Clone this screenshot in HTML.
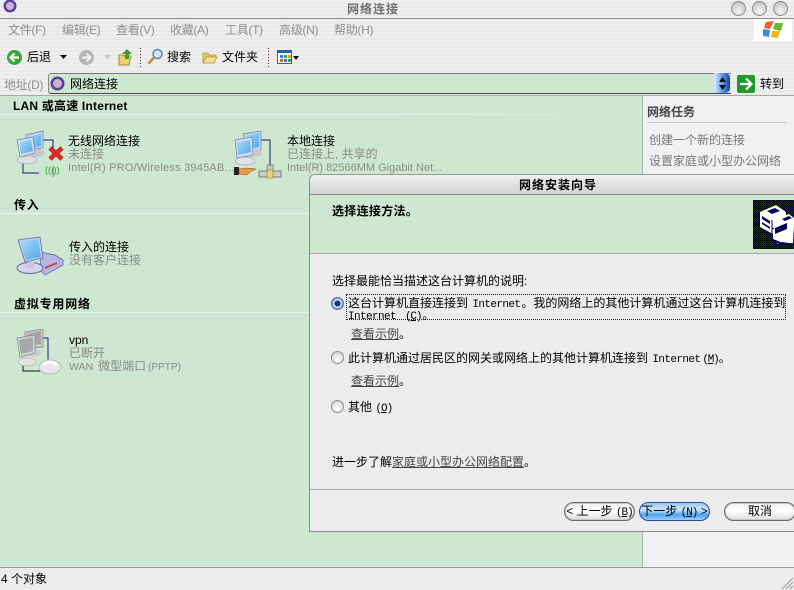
<!DOCTYPE html>
<html><head><meta charset="utf-8"><title>网络连接</title>
<style>
html,body{margin:0;padding:0}
body{width:794px;height:590px;overflow:hidden;position:relative;background:#ececec;font:12px/14px "WenQuanYi Zen Hei","Liberation Sans","Noto Sans CJK SC",sans-serif;color:#000}
.a{position:absolute;white-space:nowrap}
.stripe{background:repeating-linear-gradient(180deg,#efefef 0,#efefef 2px,#e9e9e9 2px,#e9e9e9 4px)}
.g{color:#8b8b8b}
.m{color:#8f8f8f;top:23px;letter-spacing:-.3px}
.b{font-weight:bold}
.l{font-family:"Liberation Sans",sans-serif;font-size:11px}
.t{font-family:"Liberation Mono",monospace;font-size:11px;letter-spacing:-.6px;color:#000}
.lnk{color:#444;text-decoration:underline}
.hr{position:absolute;height:1px}
.wbtn{position:absolute;width:13px;height:13px;border-radius:50%;top:1px;background:radial-gradient(circle at 50% 70%,#f4f4f4,#cfcfcf 65%,#aaa);border:1px solid #8c8c8c}
.radio{position:absolute;left:331px;width:11px;height:11px;border-radius:50%;border:1px solid #8a8a8a;background:radial-gradient(circle at 50% 75%,#fff,#d0d0d0)}
.btn{position:absolute;top:502px;height:17px;border:1px solid #6a6a6a;border-radius:10px;box-shadow:inset 0 0 0 1px #c8c8c8;background:linear-gradient(#f0f0f0,#fff 45%,#dedede);text-align:center;line-height:17px}
svg{position:absolute;display:block}
</style></head><body>

<div class="a stripe" style="left:0;top:0;width:794px;height:567px"></div>
<!-- title bar -->
<div class="a" style="left:0;top:18px;width:794px;height:1px;background:#8c8c8c"></div>
<svg style="left:2px;top:0" width="16" height="14"><circle cx="8" cy="6" r="6.5" fill="#5b3f9c"/><circle cx="8" cy="6" r="4" fill="#c9b3dc"/><circle cx="8" cy="6" r="1.8" fill="#eaa9c8"/></svg>
<div class="a b" style="left:347px;top:2px;color:#707070;letter-spacing:1px">网络连接</div>
<div class="wbtn" style="left:731px"></div><div class="wbtn" style="left:752px"></div><div class="wbtn" style="left:773px"></div>

<!-- menu -->
<div class="a m" style="left:8px">文件(F)</div>
<div class="a m" style="left:62px">编辑(E)</div>
<div class="a m" style="left:116px">查看(V)</div>
<div class="a m" style="left:170px">收藏(A)</div>
<div class="a m" style="left:225px">工具(T)</div>
<div class="a m" style="left:279px">高级(N)</div>
<div class="a m" style="left:334px">帮助(H)</div>
<div class="a" style="left:754px;top:19px;width:38px;height:22px;background:#fff"></div>
<svg style="left:763px;top:20px" width="21" height="20"><path d="M3 2l8-1-4 8-6-1z" fill="#e8622c"/><path d="M12 3h8l-2 8-8-2z" fill="#6fb52c"/><path d="M0 9l7 1-1 7-6-1z" fill="#3d8be0"/><path d="M9 11h8l-2 7-7-1z" fill="#f3b81c"/></svg>

<!-- toolbar -->
<svg style="left:7px;top:50px" width="15" height="15"><circle cx="7.5" cy="7.5" r="7.5" fill="#3aa53a"/><path d="M12 7.5H4M7.5 3.5l-4 4 4 4" fill="none" stroke="#fff" stroke-width="2.2"/></svg>
<div class="a" style="left:27px;top:50px">后退</div>
<svg style="left:60px;top:55px" width="7" height="4"><path d="M0 0h7L3.5 4z" fill="#111"/></svg>
<svg style="left:79px;top:50px" width="15" height="15"><circle cx="7.5" cy="7.5" r="7.5" fill="#b4b4b4"/><path d="M3 7.5h8M7.5 3.5l4 4-4 4" fill="none" stroke="#eee" stroke-width="2.2"/></svg>
<svg style="left:104px;top:55px" width="7" height="4"><path d="M0 0h7L3.5 4z" fill="#c4c4c4"/></svg>
<svg style="left:118px;top:48px" width="16" height="18"><path d="M1 7h4l1 1h7l-2 9H1z" fill="#f0cf70" stroke="#a98a30"/><path d="M9 1l5 5h-3v5H7V6H4z" fill="#3d9a2f"/></svg>
<div class="a" style="left:140px;top:48px;width:1px;height:19px;background:repeating-linear-gradient(180deg,#5a1e2a 0 1px,transparent 1px 3px)"></div>
<svg style="left:147px;top:48px" width="17" height="18"><circle cx="10.500" cy="6" r="4.500" fill="#cfe3f7" stroke="#6a87b8" stroke-width="1.500"/><path d="M7 9.500L1.500 15.500" stroke="#c78a3a" stroke-width="2.500"/></svg>
<div class="a" style="left:167px;top:50px">搜索</div>
<svg style="left:202px;top:51px" width="16" height="13"><path d="M1 2h5l1 2h7v2H4L2 12H1z" fill="#e5c560" stroke="#b79635" stroke-width=".8"/><path d="M4 6h11l-3 6H1.500z" fill="#f5de93" stroke="#b79635" stroke-width=".8"/></svg>
<div class="a" style="left:222px;top:50px">文件夹</div>
<div class="a" style="left:268px;top:48px;width:1px;height:19px;background:repeating-linear-gradient(180deg,#5a1e2a 0 1px,transparent 1px 3px)"></div>
<svg style="left:277px;top:50px" width="16" height="15"><rect x=".5" y=".5" width="14" height="13" fill="#fff" stroke="#2b5fb5"/><rect x="1" y="1" width="13" height="2" fill="#2b5fb5"/><path d="M3 5h3v3H3z" fill="#3a7ad0"/><path d="M7 5h3v3H7z" fill="#3ea04a"/><path d="M11 5h3v3h-3z" fill="#d8a030"/><path d="M3 9h3v3H3z" fill="#d0603a"/><path d="M7 9h3v3H7z" fill="#3a7ad0"/><path d="M11 9h3v3h-3z" fill="#3ea04a"/></svg>
<svg style="left:293px;top:56px" width="6" height="4"><path d="M0 0h6L3 4z" fill="#111"/></svg>

<!-- address -->
<div class="a m" style="left:4px;top:78px">地址(D)</div>
<div class="a" style="left:48px;top:73px;width:682px;height:19px;background:#cde7d0;border-top:1px solid #7a7a7a;border-bottom:1px solid #444;border-left:1px solid #888;border-radius:3px 0 0 3px"></div>
<svg style="left:50px;top:76px" width="15" height="15"><circle cx="7.500" cy="7.500" r="7" fill="#5b3f9c"/><circle cx="7.500" cy="7.500" r="4.500" fill="#c9b3dc"/><circle cx="7.500" cy="7.500" r="2" fill="#eaa9c8"/></svg>
<div class="a" style="left:70px;top:77px">网络连接</div>
<div class="a" style="left:714px;top:73px;width:16px;height:20px;background:linear-gradient(90deg,#dcebff,#4c8be8 60%,#1a3f9a);border-radius:0 5px 5px 0"></div>
<svg style="left:719px;top:77px" width="7" height="13"><path d="M3.500 0L7 5H0zM0 8h7l-3.500 5z" fill="#111"/></svg>
<svg style="left:737px;top:75px" width="18" height="18"><rect width="18" height="18" rx="2" fill="#1d9a2c"/><path d="M3 9h11M9 3.500L14.500 9 9 14.500" fill="none" stroke="#fff" stroke-width="2.200"/></svg>
<div class="a" style="left:760px;top:77px">转到</div>

<!-- content -->
<div class="a" style="left:0;top:95px;width:794px;height:1px;background:#a8a8a8"></div>
<div class="a" style="left:0;top:96px;width:642px;height:471px;background:#cde7d0"></div>
<div class="a" style="left:642px;top:96px;width:1px;height:471px;background:#aab5ab"></div>
<div class="a" style="left:643px;top:96px;width:151px;height:471px;background:#f1f1f1"></div>
<div class="a" style="left:0;top:567px;width:794px;height:1px;background:#9a9a9a"></div>

<div class="a b" style="left:13px;top:99px;letter-spacing:.2px">LAN 或高速 Internet</div>
<div class="hr" style="left:0;top:114px;width:642px;background:linear-gradient(90deg,#e8f3e9,#e8f3e9 60%,#cde7d0)"></div>
<div class="a b" style="left:14px;top:198px;letter-spacing:.8px">传入</div>
<div class="hr" style="left:0;top:213px;width:642px;background:linear-gradient(90deg,#e8f3e9,#e8f3e9 60%,#cde7d0)"></div>
<div class="a b" style="left:14px;top:297px;letter-spacing:.8px">虚拟专用网络</div>
<div class="hr" style="left:0;top:312px;width:642px;background:linear-gradient(90deg,#e8f3e9,#e8f3e9 60%,#cde7d0)"></div>

<!-- wireless -->
<svg style="left:15px;top:129px" width="50" height="50">
<defs><linearGradient id="s" x1="0" y1="0" x2="1" y2="1"><stop offset="0" stop-color="#a8dcfa"/><stop offset="1" stop-color="#4fa6ea"/></linearGradient></defs>
<path d="M28 11h10v8" fill="none" stroke="#1a1a70"/><path d="M8 34v10h16" fill="none" stroke="#1a1a70"/>
<path d="M11 6l17-4v17l-15 2z" fill="#c6d2e6" stroke="#6a82a8" stroke-width=".7"/><path d="M13 8l13-3v12l-12 2z" fill="url(#s)"/><ellipse cx="22" cy="24" rx="8" ry="4" fill="#c8c8d4"/>
<path d="M2 11l16-3 2 16-15 4z" fill="#d4deee" stroke="#6a82a8" stroke-width=".7"/><path d="M4 13l12-2 2 11-12 3z" fill="url(#s)"/><path d="M8 28h6v2H8z" fill="#aab"/><ellipse cx="12" cy="31" rx="10" ry="4" fill="#e0e0e8" stroke="#8a8a9a" stroke-width=".5"/>
<path d="M35 19l12 11M47 19L35 30" stroke="#8f1210" stroke-width="4.500"/><path d="M35 19l12 11M47 19L35 30" stroke="#e42a24" stroke-width="3"/>
<text x="30" y="44" font-size="9" fill="#18b018" font-family="Liberation Sans">((ı))</text><path d="M38 37v11" stroke="#7a7a9a"/>
</svg>
<div class="a" style="left:68px;top:134px">无线网络连接</div>
<div class="a g" style="left:68px;top:147px">未连接</div>
<div class="a g l" style="left:68px;top:161px;letter-spacing:.22px">Intel(R) PRO/Wireless 3945AB...</div>

<!-- LAN -->
<svg style="left:234px;top:129px" width="50" height="50">
<path d="M27 11h9v26" fill="none" stroke="#1a1a70"/>
<path d="M9 5l18-3v19l-14 2z" fill="#c6d2e6" stroke="#6a82a8" stroke-width=".7"/><path d="M11 7l14-3v14l-12 2z" fill="url(#s)"/><ellipse cx="20" cy="24" rx="8" ry="4" fill="#c8c8d4"/>
<path d="M1 11l17-3 1 18-16 3z" fill="#d4deee" stroke="#6a82a8" stroke-width=".7"/><path d="M3 13l13-2 1 12-13 3z" fill="url(#s)"/><ellipse cx="11" cy="32" rx="10" ry="4" fill="#e0e0e8" stroke="#8a8a9a" stroke-width=".5"/>
<path d="M0 38h5v8H0z" fill="#222"/><path d="M5 40l8-1 9 1-6 3-3 3-8-1z" fill="#e89a4a" stroke="#7a4a1a" stroke-width=".5"/>
<rect x="25" y="42" width="22" height="6" fill="#cfcfc8" stroke="#555" stroke-width=".7"/><rect x="33" y="36" width="6" height="6" fill="#c8c8c0" stroke="#666" stroke-width=".6"/><rect x="33" y="41" width="6" height="8" fill="#ecd672" stroke="#8a7a30" stroke-width=".6"/>
</svg>
<div class="a" style="left:287px;top:134px">本地连接</div>
<div class="a g" style="left:287px;top:147px">已连接上, 共享的</div>
<div class="a g l" style="left:287px;top:161px">Intel(R) 82566MM Gigabit Net...</div>

<!-- incoming -->
<svg style="left:15px;top:235px" width="50" height="42">
<path d="M25 17l15 3 8 5v5L30 40l-4-4z" fill="#b4b4e6" stroke="#5a5a98" stroke-width=".7"/>
<path d="M3 5l22-3 3 21-18 4z" fill="#c4cce8" stroke="#6a6aa8" stroke-width=".8"/><path d="M5 7l18-3 3 18-15 3z" fill="url(#s)"/>
<ellipse cx="15" cy="33" rx="13" ry="5.500" fill="#d4d4ea" stroke="#6a6a98"/>
<path d="M12 27h7v6h-7z" fill="#c8c8e4"/>
<path d="M30 33l12-5" stroke="#c4482a" stroke-width="2"/>
</svg>
<div class="a" style="left:69px;top:240px">传入的连接</div>
<div class="a g" style="left:69px;top:253px">没有客户连接</div>

<!-- vpn -->
<svg style="left:15px;top:329px" width="50" height="46">
<path d="M28 9h5v22" fill="none" stroke="#1a1a90"/><path d="M8 34v8h17" fill="none" stroke="#111"/>
<path d="M10 3l18-3v18l-18 2z" fill="#c8c8c8" stroke="#888" stroke-width=".7"/><path d="M12 5l14-3v13l-13 2z" fill="#a4a4a4"/><ellipse cx="19" cy="24" rx="7" ry="4" fill="#ccc"/>
<path d="M2 9l18-3v18L5 28z" fill="#d4d4d4" stroke="#888" stroke-width=".7"/><path d="M4 11l14-3v14L6 25z" fill="#a8a8a8"/><ellipse cx="12" cy="33" rx="9" ry="4" fill="#e4e4e4" stroke="#999" stroke-width=".5"/>
<ellipse cx="35" cy="38" rx="11" ry="7" fill="#e8e8e8" stroke="#bbb"/><path d="M28 36q7-6 14 0" fill="none" stroke="#fff" stroke-width="3"/>
</svg>
<div class="a" style="left:69px;top:333px">vpn</div>
<div class="a g" style="left:69px;top:346px">已断开</div>
<div class="a g" style="left:69px;top:359px"><span class="l" style="font-size:10.500px">WAN</span><span style="margin-left:5px">微型端口</span><span class="l" style="font-size:10px;margin-left:2px">(PPTP)</span></div>

<!-- right panel -->
<div class="a b" style="left:647px;top:105px;color:#444">网络任务</div>
<div class="hr" style="left:647px;top:122px;width:140px;background:#c4c4c4"></div>
<div class="a g" style="left:649px;top:133px;color:#777">创建一个新的连接</div>
<div class="a g" style="left:649px;top:154px;color:#777">设置家庭或小型办公网络</div>

<!-- status -->
<div class="a" style="left:1px;top:572px">4 个对象</div>
<svg style="left:780px;top:576px" width="14" height="14"><path d="M13 2L2 13M13 6L6 13M13 10l-3 3" stroke="#999"/></svg>

<!-- dialog -->
<div class="a" style="left:309px;top:174px;width:485px;height:358px;background:#ececec;border-left:1px solid #8a8a8a;border-bottom:1px solid #8a8a8a;border-top:1px solid #9a9a9a;border-radius:6px 0 0 0;box-sizing:border-box"></div>
<div class="a" style="left:310px;top:175px;width:484px;height:19px;background:linear-gradient(#f0f0f0,#d4d4d4);border-radius:6px 0 0 0;border-bottom:1px solid #8a8a8a"></div>
<div class="a b" style="left:519px;top:178px;letter-spacing:1px">网络安装向导</div>
<div class="a" style="left:310px;top:195px;width:484px;height:58px;background:#cde7d0;border-bottom:1px solid #a8a8a8"></div>
<div class="a b" style="left:332px;top:204px;letter-spacing:.3px">选择连接方法。</div>
<svg style="left:753px;top:200px" width="41" height="49">
<defs><pattern id="dith" width="2" height="2" patternUnits="userSpaceOnUse"><rect width="2" height="2" fill="#000"/><rect width="1" height="1" fill="#0000e0"/><rect x="1" y="1" width="1" height="1" fill="#0000e0"/></pattern></defs>
<rect width="41" height="49" fill="url(#dith)"/>
<path d="M7 12l16-7 10 7v3l3-1 5 4v8l-1 17-5 0-6-1-4 2-5-4v-6l-13-7z" fill="#fff"/>
<path d="M14 11l8-3 5 3-8 3zM29 19l7-3 3 2-7 3zM9 16l8 5v3l-8-5zM9 22l8 5v2l-8-5zM22 28l12-5v6l-12 5zM20 39l10 4-1 2-9-4z" fill="#000060"/>
<path d="M19 20v16M19 28l2 1" stroke="#000060" fill="none"/>
</svg>

<div class="a" style="left:332px;top:274px">选择最能恰当描述这台计算机的说明:</div>

<div class="radio" style="top:297px;background:radial-gradient(circle at 50% 50%,#12308c 0 2.500px,#dfeaff 3.500px,#4f86d8 6px);border-color:#5a6a8a"></div>
<div class="a" style="left:347px;top:295px;width:438px;height:24px;outline:1px dotted #222"></div>
<div class="a" style="left:348px;top:296px">这台计算机直接连接到 <span class="t" style="margin:0 1px">Internet</span>。我的网络上的其他计算机通过这台计算机连接到</div>
<div class="a" style="left:348px;top:308px"><span class="t">Internet</span><span class="t" style="margin-left:9px;letter-spacing:-1.200px">(<u>C</u>)</span><span style="margin-left:1px">。</span></div>
<div class="a" style="left:351px;top:327px"><span class="lnk">查看示例</span>。</div>

<div class="radio" style="top:351px"></div>
<div class="a" style="left:348px;top:351px">此计算机通过居民区的网关或网络上的其他计算机连接到 <span class="t" style="margin-left:1px">Internet</span><span class="t" style="margin-left:2px;letter-spacing:-1.200px">(<u>M</u>)</span>。</div>
<div class="a" style="left:351px;top:374px"><span class="lnk">查看示例</span>。</div>

<div class="radio" style="top:400px"></div>
<div class="a" style="left:348px;top:400px">其他 <span class="t" style="letter-spacing:-1px">(<u>O</u>)</span></div>

<div class="a" style="left:332px;top:455px">进一步了解<span class="lnk">家庭或小型办公网络配置</span>。</div>

<div class="a" style="left:310px;top:489px;width:484px;height:1px;background:#a8a8a8"></div>
<div class="btn" style="left:564px;width:69px">&lt; 上一步 <span class="t" style="letter-spacing:-1px">(<u>B</u>)</span></div>
<div class="btn" style="left:639px;width:69px;border-color:#2a4aa8;box-shadow:none;background:linear-gradient(#9cc8f4,#cfe6fb 40%,#4fa4ee 70%,#9cd0f6)">下一步 <span class="t" style="letter-spacing:-1px">(<u>N</u>)</span> &gt;</div>
<div class="btn" style="left:724px;width:70px">取消</div>

</body></html>
